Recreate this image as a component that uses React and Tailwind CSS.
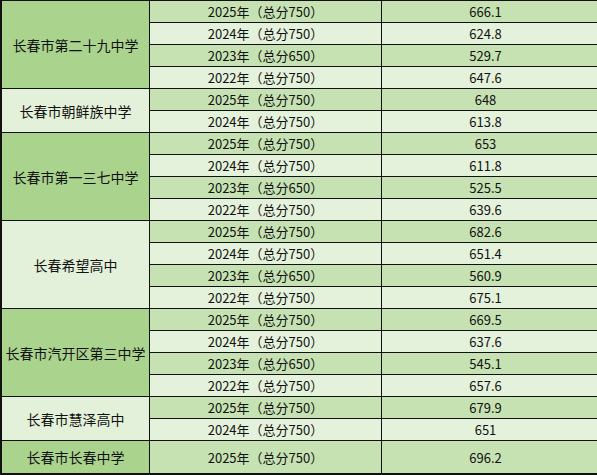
const schools = [
  { name: '长春市第二十九中学', rows: [['2025', '750', '666.1'], ['2024', '750', '624.8'], ['2023', '650', '529.7'], ['2022', '750', '647.6']] },
  { name: '长春市朝鲜族中学', rows: [['2025', '750', '648'], ['2024', '750', '613.8']] },
  { name: '长春市第一三七中学', rows: [['2025', '750', '653'], ['2024', '750', '611.8'], ['2023', '650', '525.5'], ['2022', '750', '639.6']] },
  { name: '长春希望高中', rows: [['2025', '750', '682.6'], ['2024', '750', '651.4'], ['2023', '650', '560.9'], ['2022', '750', '675.1']] },
  { name: '长春市汽开区第三中学', rows: [['2025', '750', '669.5'], ['2024', '750', '637.6'], ['2023', '650', '545.1'], ['2022', '750', '657.6']] },
  { name: '长春市慧泽高中', rows: [['2025', '750', '679.9'], ['2024', '750', '651']] },
  { name: '长春市长春中学', rows: [['2025', '750', '696.2']], tall: true },
]

export default function App() {
  let idx = 0
  return (
    <div className="w-[597px] h-[475px] bg-[#111] pt-px pl-[2px] pb-[2px] flex flex-col gap-px leading-none text-[#111] font-['Noto_Sans_CJK_SC','Noto_Sans',sans-serif]">
      {schools.map((s, si) => (
        <div key={s.name} className="flex gap-px">
          <div className={`w-[147px] shrink-0 flex items-center justify-center text-[14px] ${si % 2 === 0 ? 'bg-[#aad48e]' : 'bg-[#e4f1da]'}`}>
            {s.name}
          </div>
          <div className="flex-1 flex flex-col gap-px">
            {s.rows.map(row => {
              const bg = idx++ % 2 === 0 ? 'bg-[#c6e2b3]' : 'bg-[#e4f2db]'
              return (
                <div key={row[0]} className={`flex gap-px text-[13px] ${s.tall ? 'h-[32px]' : 'h-[21px]'}`}>
                  <div className={`w-[231px] shrink-0 flex items-center justify-center ${bg}`}>
                    {row[0]}年（总分{row[1]}）
                  </div>
                  <div className={`flex-1 flex items-center justify-center pr-2 ${bg}`}>{row[2]}</div>
                </div>
              )
            })}
          </div>
        </div>
      ))}
    </div>
  )
}
